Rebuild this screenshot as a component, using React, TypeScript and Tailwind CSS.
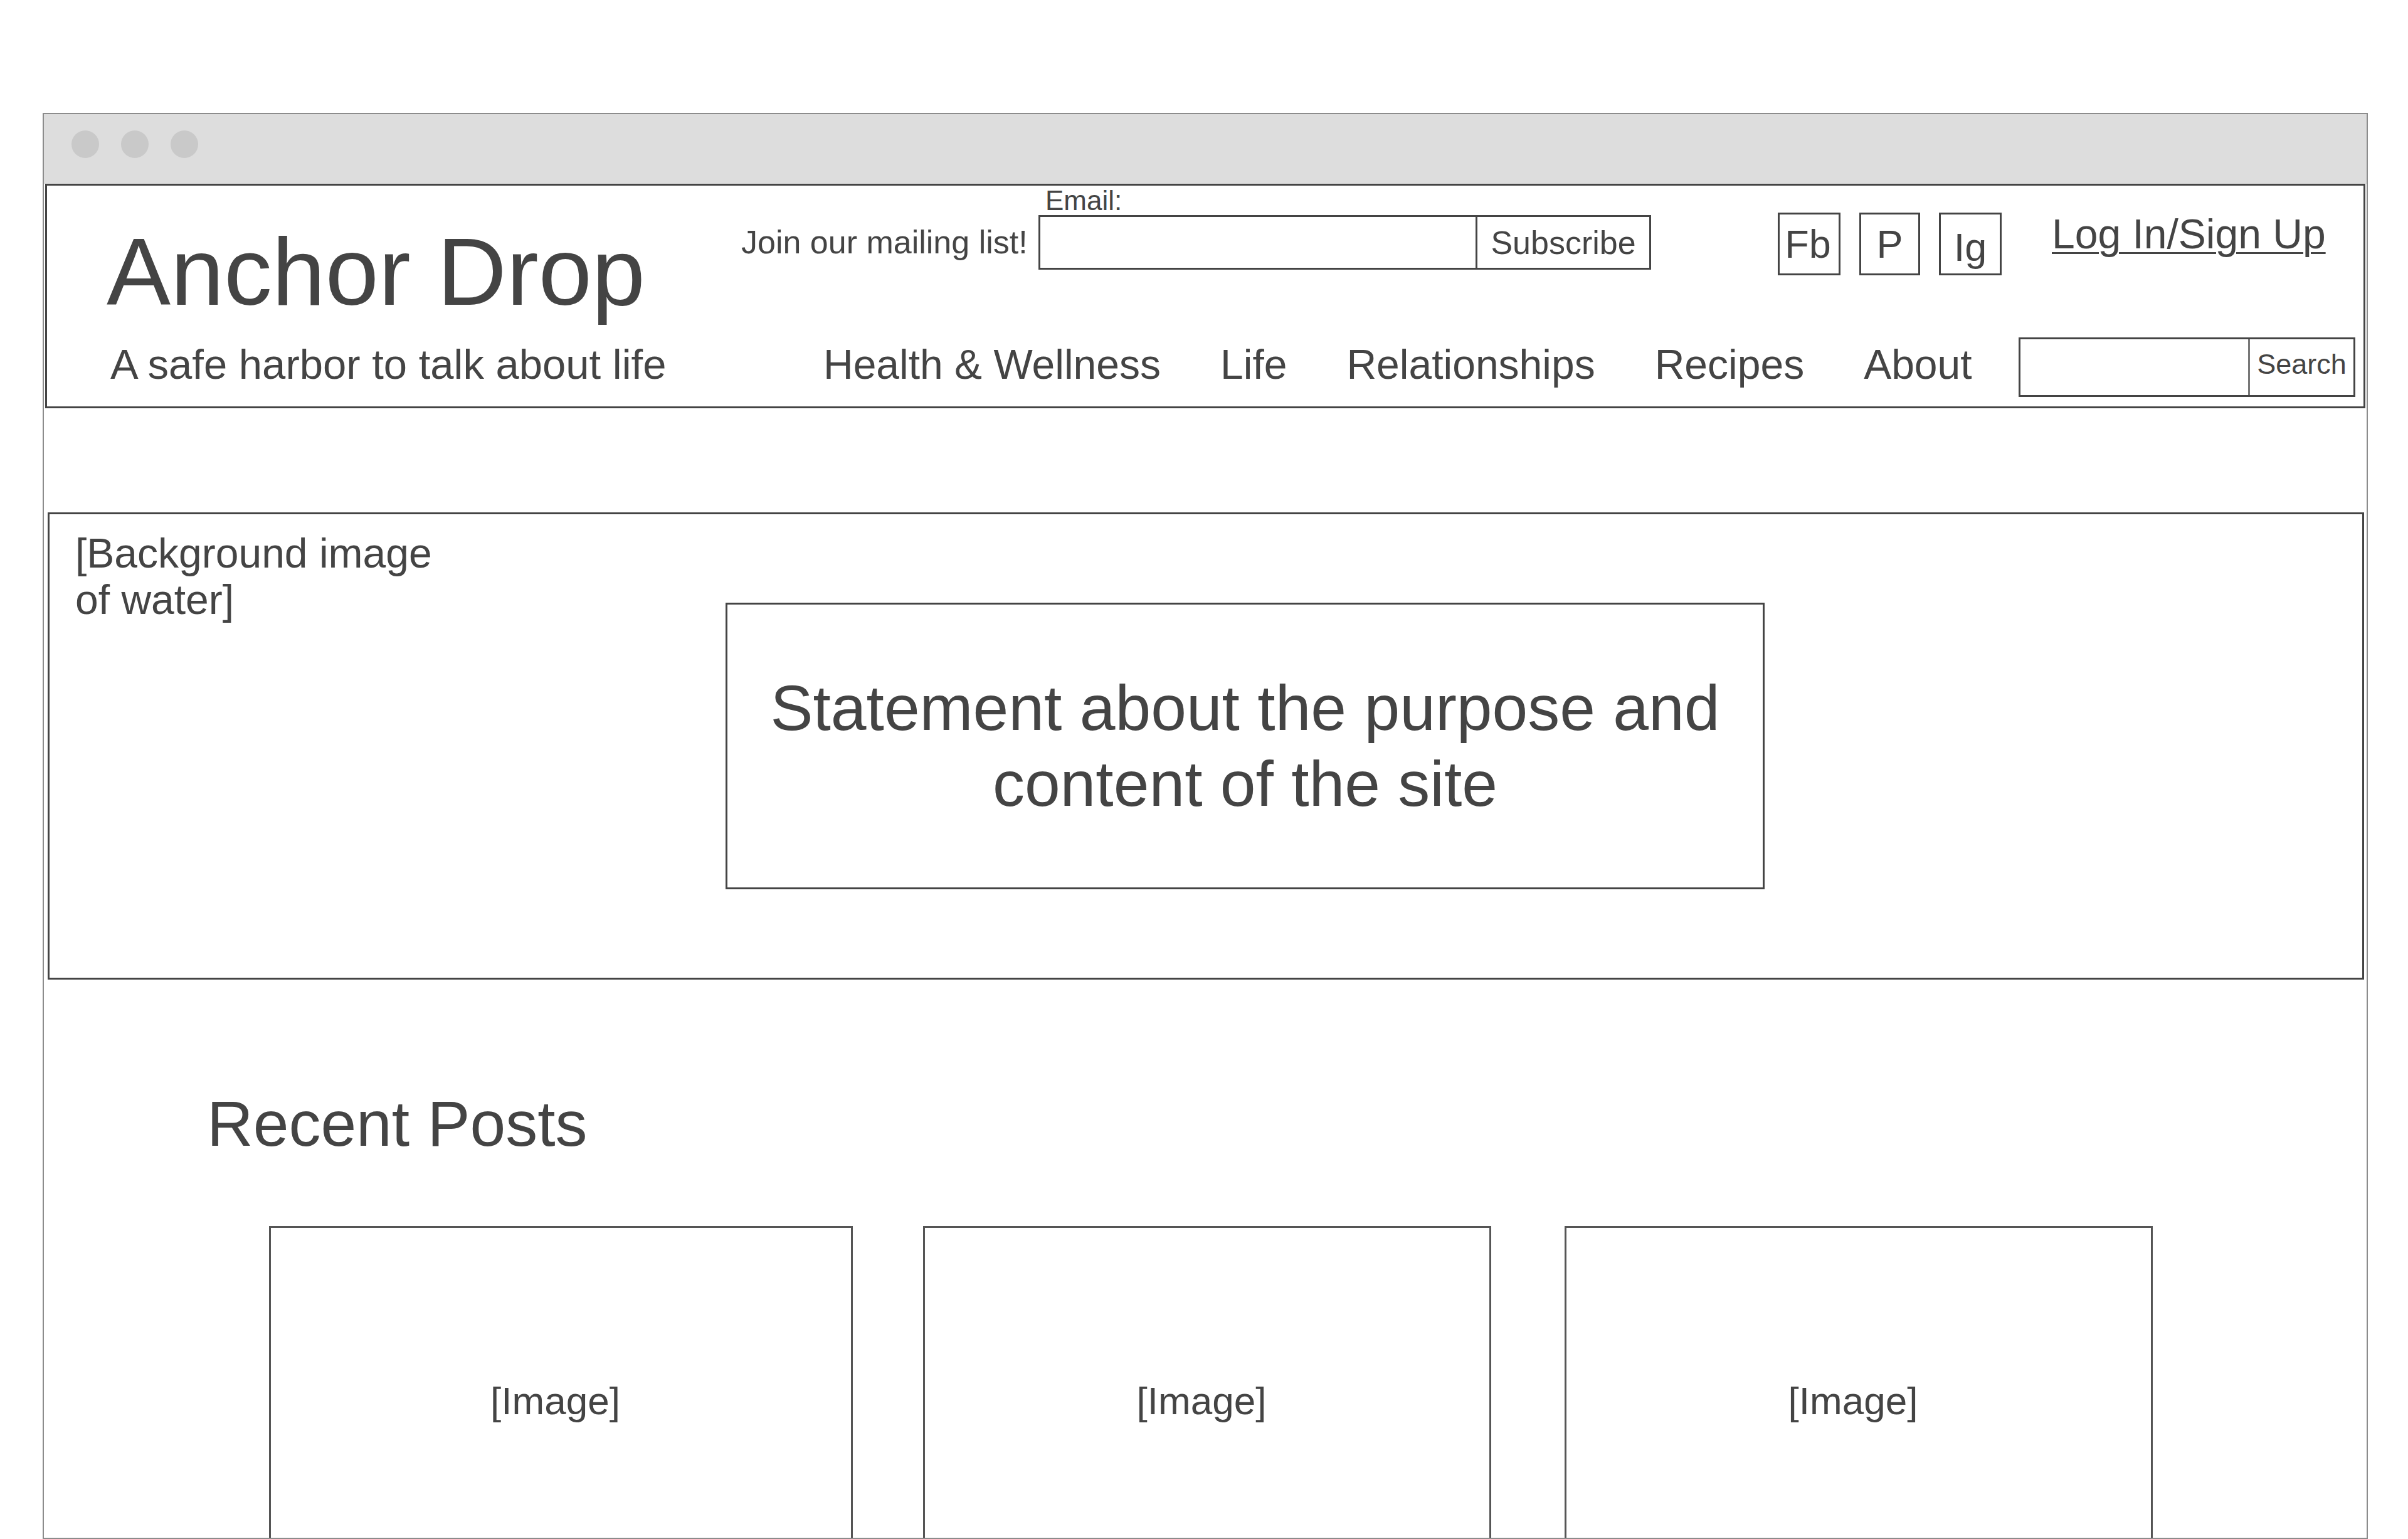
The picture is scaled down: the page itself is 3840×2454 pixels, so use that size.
const navItems = ["Health & Wellness", "Life", "Relationships", "Recipes", "About"];

export default function App() {
  return (
    <div className="h-[2454px] w-[3840px] overflow-hidden bg-white pl-[68px] pt-[180px] font-['Liberation_Sans',Arial,sans-serif] text-[#444]">
      {/* browser frame */}
      <div className="flex h-[2274px] w-[3708px] flex-col overflow-hidden border-2 border-[#8c8c8c]">
        <div className="flex h-[111px] shrink-0 gap-[35px] bg-[#dddddd] pl-[44px] pt-[26px]">
          <span className="h-[44px] w-[44px] rounded-full bg-[#c9c9c9]" />
          <span className="h-[44px] w-[44px] rounded-full bg-[#c9c9c9]" />
          <span className="h-[44px] w-[44px] rounded-full bg-[#c9c9c9]" />
        </div>

        {/* header */}
        <header className="ml-[2px] flex h-[358px] w-[3700px] shrink-0 border-[3px] border-[#444]">
          <div className="flex w-[1107px] shrink-0 flex-col pl-[95px]">
            <h1 className="mt-[60px] whitespace-nowrap text-[153px] leading-none">Anchor Drop</h1>
            <p className="ml-[6px] mt-[38px] whitespace-nowrap text-[67px] leading-none">
              A safe harbor to talk about life
            </p>
          </div>

          <div className="flex flex-1 flex-col">
            <div className="flex h-[142px] shrink-0 items-start">
              <span className="mt-[64px] w-[474px] shrink-0 whitespace-nowrap text-[52px] leading-none">
                Join our mailing list!
              </span>
              <div className="flex flex-col">
                <label className="ml-[11px] mt-[2px] text-[44px] leading-none">Email:</label>
                <div className="mt-[1px] flex h-[87px] w-[977px] border-[3px] border-[#444]">
                  <input className="h-full w-[694px] bg-transparent outline-none" />
                  <button className="flex flex-1 items-center justify-center border-l-[3px] border-[#444] text-[52px] leading-none">
                    Subscribe
                  </button>
                </div>
              </div>

              <div className="ml-[202px] mt-[43px] flex gap-[30px]">
                <span className="flex h-[100px] w-[100px] items-center justify-center border-[3px] border-[#444] pr-[4px] text-[63px] leading-none">
                  Fb
                </span>
                <span className="flex h-[100px] w-[97px] items-center justify-center border-[3px] border-[#444] text-[63px] leading-none">
                  P
                </span>
                <span className="flex h-[100px] w-[100px] items-center justify-center border-[3px] border-[#444] pt-[11px] text-[63px] leading-none">
                  Ig
                </span>
              </div>

              <a className="ml-[80px] mt-[44px] whitespace-nowrap text-[66px] leading-none underline decoration-[3px] underline-offset-[6px]">
                Log In/Sign Up
              </a>
            </div>

            <div className="mt-[100px] flex items-start">
              <nav className="ml-[131px] mt-[10px] flex gap-[95px] whitespace-nowrap text-[66px] leading-none">
                {navItems.map((item) => (
                  <a key={item}>{item}</a>
                ))}
              </nav>
              <div className="ml-auto mr-[13px] flex h-[95px] w-[537px] border-[3px] border-[#444]">
                <input className="h-full w-[363px] bg-transparent outline-none" />
                <button className="flex flex-1 items-center justify-center border-l-[3px] border-[#777] pb-[10px] text-[45px] leading-none">
                  Search
                </button>
              </div>
            </div>
          </div>
        </header>

        {/* hero */}
        <section className="ml-[6px] mt-[166px] flex h-[745px] w-[3694px] shrink-0 items-start border-[3px] border-[#444]">
          <p className="w-[681px] shrink-0 pl-[41px] pt-[25px] text-[66px] leading-[74px]">
            [Background image of water]
          </p>
          <div className="ml-[397px] flex h-[457px] w-[1657px] shrink-0 items-center justify-center self-center border-[3px] border-[#444] px-[20px] text-center text-[102px] leading-[121px]">
            Statement about the purpose and content of the site
          </div>
        </section>

        <h2 className="ml-[260px] mt-[179px] shrink-0 text-[102px] leading-none">Recent Posts</h2>

        <div className="ml-[359px] mt-[112px] flex shrink-0">
          <div className="flex h-[556px] w-[931px] shrink-0 items-center justify-center border-[3px] border-[#555] pr-[18px] text-[62px]">
            [Image]
          </div>
          <div className="ml-[112px] flex h-[556px] w-[906px] shrink-0 items-center justify-center border-[3px] border-[#555] pr-[18px] text-[62px]">
            [Image]
          </div>
          <div className="ml-[117px] flex h-[556px] w-[938px] shrink-0 items-center justify-center border-[3px] border-[#555] pr-[18px] text-[62px]">
            [Image]
          </div>
        </div>
      </div>
    </div>
  );
}
